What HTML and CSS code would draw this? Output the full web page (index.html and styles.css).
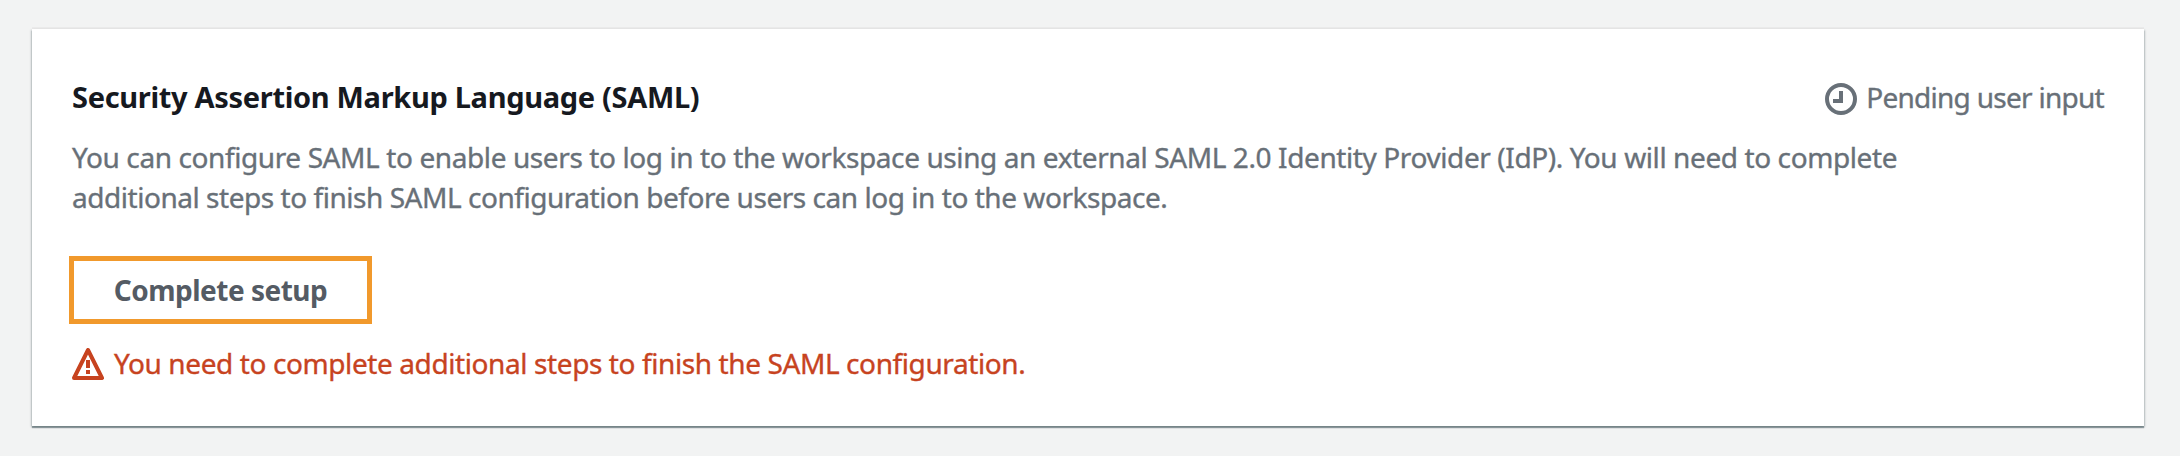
FILE: index.html
```html
<!DOCTYPE html>
<html lang="en">
<head>
<meta charset="utf-8">
<title>SAML authentication</title>
<link rel="stylesheet" href="styles.css">
</head>
<body>
<main class="card">
  <header class="card-header">
    <h2 class="title">Security Assertion Markup Language (SAML)</h2>
    <div class="status">
      <svg class="icon" viewBox="0 0 16 16" fill="none" stroke="currentColor" stroke-width="2"><circle cx="8" cy="8" r="7"/><path d="M8 4v5H4"/></svg>
      <span class="status-text">Pending user input</span>
    </div>
  </header>
  <p class="description"><span class="line-one">You can configure SAML to enable users to log in to the workspace using an external SAML 2.0 Identity Provider (IdP). You will need to complete</span><br><span class="line-two">additional steps to finish SAML configuration before users can log in to the workspace.</span></p>
  <button class="setup-button" type="button">Complete setup</button>
  <div class="error">
    <svg class="icon" viewBox="0 0 16 16" fill="none" stroke="currentColor" stroke-width="2" stroke-linejoin="round"><path d="M8 1l7 14H1L8 1z"/><path d="M8 6v4M8 11v2"/></svg>
    <span class="error-text">You need to complete additional steps to finish the SAML configuration.</span>
  </div>
</main>
</body>
</html>
```
FILE: styles.css
```css
* { box-sizing: border-box; }
body {
  margin: 0;
  height: 456px;
  padding: 29px 36px 30px 32px;
  background: #f2f3f3;
  font-family: "Noto Sans", "Open Sans", sans-serif;
  font-size: 28px;
  line-height: 40px;
  color: #687078;
}
.card {
  height: 397px;
  padding: 48px 40px 0;
  background: #fff;
  box-shadow: 0 2px 1px rgba(0, 28, 36, .35), 1px 1px 2px rgba(0, 28, 36, .2), -1px 1px 2px rgba(0, 28, 36, .2), 0 -2px 0 #eaeaea;
}
.card-header { display: flex; justify-content: space-between; height: 60px; white-space: nowrap; }
.title { margin: 0; font-size: 29px; line-height: 40px; font-weight: 700; color: #16191f; letter-spacing: -.32px; }
.status { display: flex; gap: 9px; }
.status-text { letter-spacing: -.72px; -webkit-text-stroke: .35px currentColor; }
.icon { display: block; width: 32px; height: 32px; flex: none; margin-top: 6px; }
.description { margin: 0; white-space: nowrap; -webkit-text-stroke: .35px currentColor; }
.line-one { letter-spacing: -.4px; }
.line-two { letter-spacing: -.46px; }
.setup-button {
  display: block;
  width: 303px;
  height: 68px;
  margin: 39px 0 0 -3px;
  padding: 0;
  border: 5px solid #f1992c;
  background: #fff;
  color: #545b64;
  font: 700 28px/40px "Noto Sans", "Open Sans", sans-serif;
  letter-spacing: -.5px;
}
.error { display: flex; gap: 10px; margin-top: 19px; color: #c7431f; white-space: nowrap; }
.error .icon { margin-top: 5px; }
.error-text { letter-spacing: -.4px; -webkit-text-stroke: .35px currentColor; }
```
